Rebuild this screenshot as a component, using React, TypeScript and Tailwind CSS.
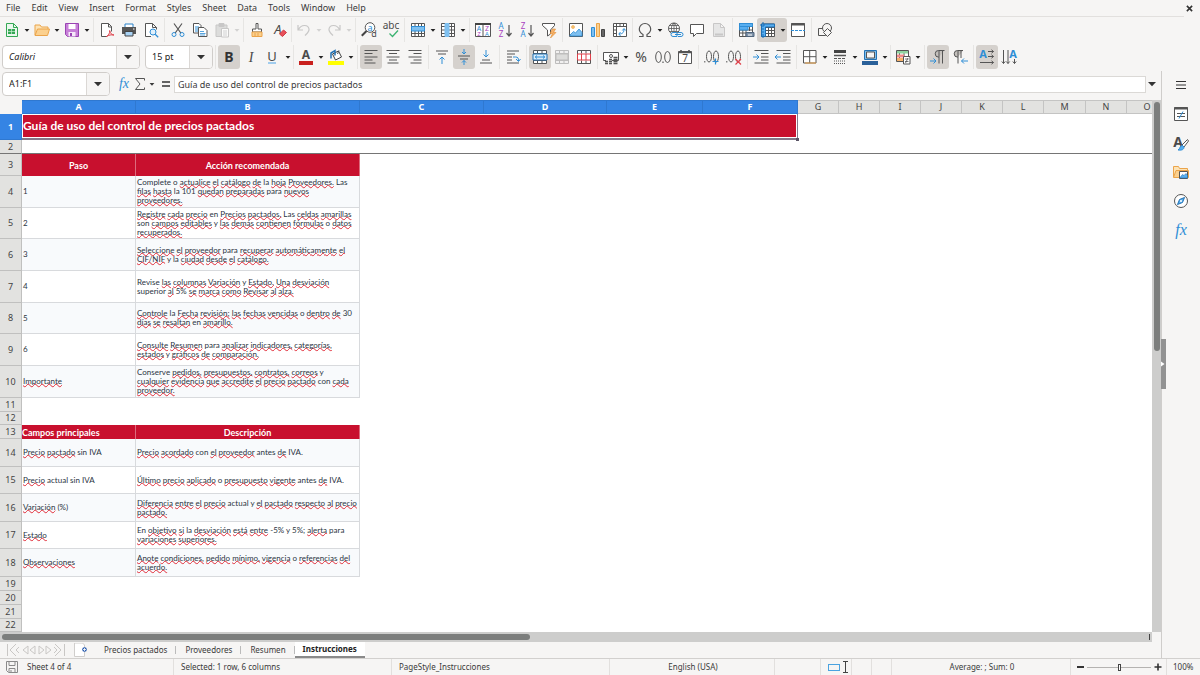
import type { ReactNode } from "react";
import clsx from "clsx";

const menus = ["File", "Edit", "View", "Insert", "Format", "Styles", "Sheet", "Data", "Tools", "Window", "Help"];

const columns = [
  { name: "A", width: "w-[114px]", selected: true },
  { name: "B", width: "w-56", selected: true },
  { name: "C", width: "w-[124px]", selected: true },
  { name: "D", width: "w-[123px]", selected: true },
  { name: "E", width: "w-24", selected: true },
  { name: "F", width: "w-[95px]", selected: true },
  { name: "G", width: "w-[41px]" },
  { name: "H", width: "w-[41px]" },
  { name: "I", width: "w-[41px]" },
  { name: "J", width: "w-[41px]" },
  { name: "K", width: "w-[41px]" },
  { name: "L", width: "w-[41px]" },
  { name: "M", width: "w-[42px]" },
  { name: "N", width: "w-[41px]" },
  { name: "O", width: "w-[41px]" },
];

type Row = {
  n: number;
  height: string;
  kind?: "title" | "head" | "data" | "frozen";
  a?: string;
  b?: string[];
  striped?: boolean;
};

// Words between brackets get the spellcheck wave
const rows: Row[] = [
  { n: 1, height: "h-[26px]", kind: "title", a: "Guía de uso del control de precios pactados" },
  { n: 2, height: "h-3.5", kind: "frozen" },
  { n: 3, height: "h-[22px]", kind: "head", a: "Paso", b: ["Acción recomendada"] },
  {
    n: 4, height: "h-8", kind: "data", striped: true, a: "1",
    b: [
      "Complete o [actualice] [el] [catálogo] [de] la [hoja] [Proveedores.] Las",
      "[filas] [hasta] la 101 [quedan] [preparadas] para [nuevos]",
      "[proveedores.]",
    ],
  },
  {
    n: 5, height: "h-[31px]", kind: "data", a: "2",
    b: [
      "[Registre] [cada] [precio] en [Precios] [pactados.] Las [celdas] [amarillas]",
      "son [campos] [editables] y [las] [demás] [contienen] [fórmulas] o [datos]",
      "[recuperados.]",
    ],
  },
  {
    n: 6, height: "h-8", kind: "data", striped: true, a: "3",
    b: ["[Seleccione] [el] [proveedor] para [recuperar] [automáticamente] [el]", "[CIF/NIF] y la [ciudad] [desde] [el] [catálogo.]"],
  },
  {
    n: 7, height: "h-8", kind: "data", a: "4",
    b: ["Revise [las] [columnas] [Variación] y [Estado.] [Una] [desviación]", "superior [al] 5% [se] [marca] [como] [Revisar] [al] [alza.]"],
  },
  {
    n: 8, height: "h-[31px]", kind: "data", striped: true, a: "5",
    b: ["[Controle] la [Fecha] [revisión;] [las] [fechas] [vencidas] o [dentro] [de] 30", "[días] [se] [resaltan] en [amarillo.]"],
  },
  {
    n: 9, height: "h-8", kind: "data", a: "6",
    b: ["[Consulte] [Resumen] para [analizar] [indicadores,] [categorías,]", "[estados] y [gráficos] [de] [comparación.]"],
  },
  {
    n: 10, height: "h-8", kind: "data", striped: true, a: "[Importante]",
    b: [
      "Conserve [pedidos,] [presupuestos,] [contratos,] [correos] y",
      "[cualquier] [evidencia] [que] [accredite] [el] [precio] [pactado] con [cada]",
      "[proveedor.]",
    ],
  },
  { n: 11, height: "h-3.5" },
  { n: 12, height: "h-[13px]" },
  { n: 13, height: "h-3.5", kind: "head", a: "Campos principales", b: ["Descripción"] },
  {
    n: 14, height: "h-7", kind: "data", striped: true, a: "[Precio] [pactado] sin IVA",
    b: ["[Precio] [acordado] con [el] [proveedor] antes [de] IVA."],
  },
  {
    n: 15, height: "h-[27px]", kind: "data", a: "[Precio] actual sin IVA",
    b: ["[Último] [precio] [aplicado] o [presupuesto] [vigente] antes [de] IVA."],
  },
  {
    n: 16, height: "h-7", kind: "data", striped: true, a: "[Variación] (%)",
    b: ["[Diferencia] [entre] [el] [precio] actual y [el] [pactado] [respecto] [al] [precio]", "[pactado.]"],
  },
  {
    n: 17, height: "h-[27px]", kind: "data", a: "[Estado]",
    b: ["En [objetivo] [si] la [desviación] [está] [entre] -5% y 5%; [alerta] para", "[variaciones] [superiores.]"],
  },
  {
    n: 18, height: "h-7", kind: "data", striped: true, a: "[Observaciones]",
    b: ["[Anote] [condiciones,] [pedido] [mínimo,] [vigencia] o [referencias] [del]", "[acuerdo.]"],
  },
  { n: 19, height: "h-3.5" },
  { n: 20, height: "h-3.5" },
  { n: 21, height: "h-3.5" },
  { n: 22, height: "h-[13px]" },
];

const Spelled = ({ text }: { text: string }) => (
  <>
    {text.split(/(\[[^\]]+\])/).map((part, i) =>
      part.startsWith("[") ? (
        <span key={i} className="underline decoration-[#e02b38] decoration-wavy decoration-1 [text-decoration-skip-ink:none] [text-underline-offset:-1px]">
          {part.slice(1, -1)}
        </span>
      ) : (
        part
      ),
    )}
  </>
);

const Caret = () => (
  <svg viewBox="0 0 8 8" className="size-2 shrink-0" aria-hidden="true">
    <path d="M1.6 3h4.8L4 5.8z" fill="currentColor" />
  </svg>
);

const BigCaret = () => (
  <svg viewBox="0 0 10 10" className="size-2.5" aria-hidden="true">
    <path d="M1 3h8L5 7.3z" fill="#333" />
  </svg>
);

const Sep = ({ tight }: { tight?: boolean }) => (
  <span className={clsx("flex h-6 shrink-0 justify-center", tight ? "w-[3px]" : "w-[5px]")}>
    <span className="w-px bg-[#e6e5e3]" />
  </span>
);

type ToolProps = { label: string; children: ReactNode; menu?: boolean; active?: boolean; disabled?: boolean };

const Tool = ({ label, children, menu, active, disabled }: ToolProps) => (
  <button
    type="button"
    aria-label={label}
    disabled={disabled}
    className={clsx(
      "flex h-6 shrink-0 items-center rounded-[3px]",
      menu ? "w-[30px] pl-[3px]" : "w-[22px] justify-center",
      active && "bg-[#d5d1cd]",
      disabled ? "text-[#bbb] opacity-60" : "text-[#222]",
    )}
  >
    <svg viewBox="0 0 16 16" className="size-4 shrink-0 overflow-visible" fill="none" stroke="#555" strokeWidth="1" aria-hidden="true">
      {children}
    </svg>
    {menu && <span className="ml-[3px]"><Caret /></span>}
  </button>
);

const T = ({ x, y, size, fill = "#4a4a4a", bold, italic, serif, children }: {
  x: number; y: number; size: number; fill?: string; bold?: boolean; italic?: boolean; serif?: boolean; children: ReactNode;
}) => (
  <text
    x={x}
    y={y}
    fontSize={size}
    fill={fill}
    stroke="none"
    textAnchor="middle"
    fontWeight={bold ? 700 : 400}
    fontStyle={italic ? "italic" : "normal"}
    fontFamily={serif ? '"Liberation Serif", serif' : '"Noto Sans", sans-serif'}
  >
    {children}
  </text>
);

const Doc = ({ fill = "#fff", stroke = "#666" }: { fill?: string; stroke?: string }) => (
  <path d="M2.5 1.5h7l4 4v9h-11zM9.5 1.5v4h4" fill={fill} stroke={stroke} />
);

const StandardToolbar = () => (
  <div className="flex pl-px pt-px" role="toolbar" aria-label="Standard">
    <Tool label="New" menu>
      <path d="M2.5 1.5h7l4 4v9h-11z" fill="#eaf7ee" stroke="#35a854" />
      <path d="M9.5 1.5v4h4" stroke="#35a854" />
      <path d="M4 7h7v5H4z" fill="#35a854" stroke="none" />
      <path d="M4 9.5h7M7.5 7v5" stroke="#c9ecd3" strokeWidth=".7" />
    </Tool>
    <Tool label="Open" menu>
      <path d="M1 13V3h5l1.5 2H14v2" fill="#fde3b5" stroke="#eba44a" />
      <path d="M1 13.5 3.5 7h12l-2 6.5z" fill="#fbd08e" stroke="#eba44a" />
    </Tool>
    <Tool label="Save" menu>
      <path d="M1.5 1.5h13v13h-11l-2-2z" fill="#c77fd8" stroke="#9a44b3" />
      <path d="M4.5 2h7v5h-7z" fill="#fff" stroke="none" />
      <path d="M4.5 10h7v4.5h-7z" fill="#f6eaf9" stroke="none" />
      <path d="M6 11h2v3H6z" fill="#9a44b3" stroke="none" />
    </Tool>
    <Sep />
    <Tool label="Export as PDF">
      <path d="M8 14.5H2.5v-13h7l3 3v5M9.5 1.5V5H13" fill="#fff" />
      <path d="M7.5 14.5c2-1 3.5-3.500 3.200-6 .8 3 2 4.500 4.300 4.500-3-.5-5 0-7.500 1.500z" stroke="#e0404a" />
    </Tool>
    <Tool label="Print">
      <path d="M4 5V2h8v3" fill="#fff" stroke="#2b82c9" />
      <path d="M1 5h14v7H1z" fill="#555" stroke="none" />
      <path d="M4 9.5h8V14H4z" fill="#a9d3f5" stroke="#444" />
      <path d="M12 7h1.5" stroke="#fff" />
    </Tool>
    <Tool label="Print preview">
      <path d="M8 14.5H2.5v-13h7l4 4v2M9.5 1.5v4h4" fill="#fff" />
      <circle cx="10" cy="10" r="3" fill="#dff0fc" stroke="#2f8ed6" />
      <path d="m12.2 12.2 3 3" stroke="#2f8ed6" strokeWidth="1.3" />
    </Tool>
    <Sep />
    <Tool label="Cut">
      <path d="M4 1.5 10.8 11M12 1.5 5.2 11" stroke="#555" strokeWidth="1.2" />
      <circle cx="4" cy="12.5" r="2" stroke="#2f8ed6" />
      <circle cx="12" cy="12.5" r="2" stroke="#2f8ed6" />
    </Tool>
    <Tool label="Copy">
      <path d="M1.5 1.5H7l2 2V11H1.5z" fill="#fff" />
      <path d="M3 5h4M3 7h3M3 9h3" stroke="#2f8ed6" />
      <path d="M6.5 5.5H12l3 3v6H6.5z" fill="#fff" />
      <path d="M8 9.5h4M8 11.5h5.5M8 13h5" stroke="#2f8ed6" strokeWidth=".8" />
    </Tool>
    <Tool label="Paste" menu disabled>
      <path d="M2 3h11v11.500H2z" fill="#ccc" stroke="#aaa" />
      <path d="M5 1.5h5v3H5z" fill="#aaa" stroke="#aaa" />
      <path d="M7.5 6.5h7V15h-7z" fill="#fff" stroke="#aaa" />
      <path d="M9 9h4M9 11h4M9 13h4" stroke="#bbb" />
    </Tool>
    <Sep />
    <Tool label="Clone formatting">
      <path d="M7 1.5h2V7h3.5v3h-9V7H7z" fill="#fff" />
      <path d="M3 10h10v4.5H3z" fill="#fbd08e" stroke="#eba44a" />
      <path d="M6 11v3M9 11v3" stroke="#eba44a" />
    </Tool>
    <Tool label="Clear direct formatting">
      <T x={7} y={12} size={13} italic>A</T>
      <path d="m8.5 12 4-4 3 2.5-4 4z" fill="#e8505a" stroke="#cf3a45" />
    </Tool>
    <Sep tight />
    <Tool label="Undo" menu disabled>
      <path d="M2 3v5h5M2.5 7.5C5 2.5 12 2 13 7c.5 2.5-2 4.5-4 6.5" stroke="#aaa" strokeWidth="1.2" />
    </Tool>
    <Tool label="Redo" menu disabled>
      <path d="M14 3v5H9M13.5 7.5C11 2.5 4 2 3 7c-.5 2.5 2 4.5 4 6.5" stroke="#aaa" strokeWidth="1.2" />
    </Tool>
    <Sep />
    <Tool label="Find and replace">
      <circle cx="9" cy="5.5" r="4.8" fill="#fff" />
      <path d="M5.5 9 .8 13.7" stroke="#444" strokeWidth="2" />
      <T x={9} y={8.5} size={9} fill="#2f8ed6">a</T>
      <T x={13} y={15} size={9}>d</T>
    </Tool>
    <Tool label="Spelling">
      <T x={8} y={7} size={10}>abc</T>
      <path d="m6.5 11.5 3 3L15 8.5" stroke="#3cb371" strokeWidth="1.3" />
    </Tool>
    <Sep />
    <Tool label="Row" menu>
      <path d="M1.5 1.5h13v13h-13z" fill="#fff" />
      <path d="M1.5 11.5h13M5 1.5v13M8.5 1.5v13M11.5 1.5v13" />
      <path d="M1.500 4.500h13V9h-13z" fill="#7fc0f0" stroke="#2f8ed6" />
    </Tool>
    <Tool label="Column" menu>
      <path d="M1.5 1.5h13v13h-13z" fill="#fff" />
      <path d="M11.5 1.5v13M1.5 4.5h13M1.5 8h13M1.5 11.5h13" />
      <path d="M5 1.500h4v13H5z" fill="#7fc0f0" stroke="#7fc0f0" />
    </Tool>
    <Sep />
    <Tool label="Sort">
      <path d="M.5 1.5h15v13H.5zM8 3v12" fill="#fff" />
      <path d="M0 2h16" stroke="#444" strokeWidth="2" />
      <T x={4} y={9} size={7} fill="#2f8ed6">A</T>
      <T x={4} y={14} size={6} fill="#a93fc0">Z</T>
      <T x={12} y={9} size={7} fill="#a93fc0">Z</T>
      <T x={12} y={14} size={6} fill="#2f8ed6">A</T>
    </Tool>
    <Tool label="Sort ascending">
      <T x={4} y={7} size={8} fill="#2f8ed6">A</T>
      <T x={4} y={15} size={8} fill="#a93fc0">Z</T>
      <path d="M12 3v11M9.5 11l2.5 3 2.5-3" strokeWidth="1.2" />
    </Tool>
    <Tool label="Sort descending">
      <T x={4} y={7} size={8} fill="#a93fc0">Z</T>
      <T x={4} y={15} size={8} fill="#2f8ed6">A</T>
      <path d="M12 3v11M9.5 11l2.5 3 2.5-3" strokeWidth="1.2" />
    </Tool>
    <Tool label="AutoFilter">
      <path d="M1.5 1.5h12v2l-4 4.5v4l-3 2V8l-5-4.5z" fill="#fff" />
      <path d="M11.5 7 9 11.5h2.500L9.500 16l5.500-5.500h-2.500L14.500 7z" fill="#f6b26b" stroke="#e08a2c" strokeWidth=".6" />
    </Tool>
    <Sep />
    <Tool label="Insert image">
      <path d="M1.5 1.5h13v13h-13z" fill="#fff" />
      <circle cx="5" cy="5" r="1.5" fill="#f8c471" stroke="#eba44a" strokeWidth=".6" />
      <path d="m2 13 3.5-3.5 2 1.5L11 7l3 3.5V14H2z" fill="#7fc0f0" stroke="#2f8ed6" strokeWidth=".8" />
    </Tool>
    <Tool label="Insert chart">
      <path d="M1.5 5.5h3v9h-3z" fill="#7fc0f0" stroke="#2f8ed6" />
      <path d="M6.5 1.5h3v13h-3z" fill="#fbd08e" stroke="#eba44a" />
      <path d="M11.5 7.5h3v7h-3z" fill="#666" stroke="#444" />
    </Tool>
    <Tool label="Insert pivot table">
      <path d="M1.5 1.5h13v13h-13z" fill="#fff" />
      <path d="M1.5 4.5h13M4.5 1.5v13M8 1.5v3M11.5 1.5v3M1.5 8h3M1.5 11.5h3" />
      <path d="M7 12c4 0 5-2 5-5M8.5 10l-1.700 2 1.700 2M10.300 8.500 12 6.500l1.700 2" stroke="#2f8ed6" />
    </Tool>
    <Sep tight />
    <Tool label="Special character" menu>
      <path d="M2 14.5h4v-2C3.5 11 2.3 9.2 2.3 7A5.6 5.6 0 0 1 8 1.5 5.6 5.6 0 0 1 13.7 7c0 2.2-1.2 4-3.700 5.500v2h4" strokeWidth="1.200" />
    </Tool>
    <Tool label="Insert hyperlink">
      <circle cx="7" cy="6.5" r="5.5" fill="#fff" />
      <path d="M1.5 6.5h11M7 1v11M2.5 3.5h9M2.5 9.5h9M7 1C3.5 4 3.5 9 7 12M7 1c3.500 3 3.500 8 0 11" strokeWidth=".8" />
      <path d="M6 10.5h4v4H6a2 2 0 0 1 0-4zM11 10.5h3a2 2 0 0 1 0 4h-3M8 12.5h6" fill="#f6f5f4" stroke="#2f8ed6" />
    </Tool>
    <Tool label="Insert comment">
      <path d="M1.5 2.5h13v9h-7l-3 3v-3h-3z" fill="#fff" />
    </Tool>
    <Tool label="Headers and footers" disabled>
      <Doc fill="#ddd" stroke="#aaa" />
      <path d="M4 11.5h8v2H4z" fill="#aaa" stroke="none" />
    </Tool>
    <Sep />
    <Tool label="Define print area">
      <path d="M1.5 1.5h13v13h-13zM1.5 8h13M1.5 11h13M4.8 8v6M8 1.5v13M11.5 1.5v13" fill="#fff" />
      <path d="M1.500 1.500h13v3h-13zM1.500 4.500H10V8H1.500z" fill="#58aef0" stroke="#2f8ed6" />
      <path d="M8 10.5h8v4H8z" fill="#7f93aa" stroke="#50657c" />
      <path d="M10 9.5h4M10 13h4" stroke="#fff" />
    </Tool>
    <Tool label="Freeze rows and columns" menu active>
      <path d="M1.5 2h13v12.500h-13zM5 5.500h9.500M5 8.500h9.500M5 11.500h9.500M8.500 2v12.500M11.500 2v12.500" fill="#fff" />
      <path d="M1.5 2h13v3h-9v9.500h-4z" fill="#58aef0" stroke="#1c6fb5" />
      <path d="M3 0v16M0 3h6" stroke="#1c6fb5" strokeDasharray="2 1" />
    </Tool>
    <Tool label="Split window">
      <path d="M1.5 1.5h13v13h-13z" fill="#fff" />
      <path d="M1 2.5h14" strokeWidth="2" />
      <path d="M1 8.5h14" stroke="#2f8ed6" strokeDasharray="3 1" />
    </Tool>
    <Sep />
    <Tool label="Show draw functions">
      <path d="M1.5 6.5h7v7h-7z" />
      <circle cx="10" cy="6" r="4.5" fill="#f6f5f4" />
      <path d="m10.5 6.5 4 4-4 4-4-4z" fill="#f6f5f4" />
    </Tool>
  </div>
);

const Combo = ({ id, label, value, className, italic }: {
  id: string; label: string; value: string; className: string; italic?: boolean;
}) => (
  <div className={clsx("flex h-6 shrink-0 overflow-hidden rounded-[4px] border border-[#d0cdca] bg-white", className)}>
    <input
      id={id}
      aria-label={label}
      defaultValue={value}
      className={clsx("min-w-0 flex-1 bg-transparent px-1.5 text-[9px] text-[#222] outline-none", italic && "italic")}
    />
    <button type="button" aria-label={`${label} list`} className="flex w-[23px] items-center justify-center border-l border-[#dbd8d5] bg-[#f6f5f4]">
      <BigCaret />
    </button>
  </div>
);

const FormattingToolbar = () => (
  <div className="flex pb-0.5 pt-[3px]" role="toolbar" aria-label="Formatting">
    <div className="flex gap-[5px] pl-0.5">
      <Combo id="font-name" label="Font name" value="Calibri" className="w-[138px]" italic />
      <Combo id="font-size" label="Font size" value="15 pt" className="w-[68px]" />
    </div>
    <Sep />
    <Tool label="Bold" active><T x={8} y={13} size={14} bold fill="#333">B</T></Tool>
    <Tool label="Italic"><T x={8} y={13} size={14} italic serif>I</T></Tool>
    <Tool label="Underline" menu>
      <T x={7} y={12} size={13}>U</T>
      <path d="M3 14h8" stroke="#4aa3e8" />
    </Tool>
    <Sep tight />
    <Tool label="Font color" menu>
      <T x={8} y={10} size={12} bold>A</T>
      <path d="M1 12h14v4H1z" fill="#c9211e" stroke="none" />
    </Tool>
    <Tool label="Background color" menu>
      <path d="m4.5 5 6-3 3 6-6 3z" fill="#fff" stroke="#444" />
      <path d="M3 9.5V4l4-2.500v5" stroke="#2472b3" strokeWidth="1.500" />
      <path d="M11 1.5 9.5 5" />
      <path d="M0 12h16v4H0z" fill="#ff0" stroke="none" />
    </Tool>
    <Sep />
    <Tool label="Align left" active><path d="M1.5 1.5h13M1.5 4.5h8M1.5 8h13M1.5 11h8M1.5 14h11" /></Tool>
    <Tool label="Align center"><path d="M1.5 1.5h13M4 4.5h8M1.5 8h13M4 11h8M2.5 14h11" /></Tool>
    <Tool label="Align right"><path d="M1.5 1.5h13M6.5 4.5h8M1.5 8h13M6.5 11h8M3.5 14h11" /></Tool>
    <Sep />
    <Tool label="Align top">
      <path d="M2 2h12M4 5h8" strokeWidth="1.2" />
      <path d="M8 15V8M5.5 10.5 8 8l2.5 2.5" stroke="#2f8ed6" />
    </Tool>
    <Tool label="Center vertically" active>
      <path d="M2 7h12M4 10h8" strokeWidth="1.2" />
      <path d="M8 0v5M6 3l2 2 2-2M8 16v-4.5M6 13.5l2-2 2 2" stroke="#2f8ed6" />
    </Tool>
    <Tool label="Align bottom">
      <path d="M4 11h8M2 14h12" strokeWidth="1.2" />
      <path d="M8 1v7M5.5 5.5 8 8l2.5-2.5" stroke="#2f8ed6" />
    </Tool>
    <Sep />
    <Tool label="Wrap text">
      <path d="M2 2h12M2 5h8M2 8h5M2 11h5M2 14h12" strokeWidth="1.2" />
      <path d="M8 8h2.5c2.5 0 3 1 3 4M11 10l2.5 2.5 2-2.5" stroke="#2f8ed6" />
    </Tool>
    <Sep />
    <Tool label="Merge and center cells" active>
      <path d="M1.5 1.5h13v13h-13zM1.5 4.5h13M1.5 11.5h13M5.5 1.5v3M10 1.5v3M5.5 11.5v3M10 11.5v3" fill="#fff" />
      <path d="M1 5h14v6H1z" fill="#d8ecfb" stroke="#2472b3" />
      <path d="M3 8h10M5 6.5 3.3 8 5 9.5M11 6.5 12.7 8 11 9.5" stroke="#2f8ed6" />
    </Tool>
    <Tool label="Merge cells" disabled>
      <path d="M1.5 1.5h13v13h-13zM1.5 4.5h13M1.5 11.5h13M5.5 1.5v3M10 1.5v3M5.5 11.5v3M10 11.5v3" fill="#eee" stroke="#999" />
      <path d="M2 5h12v6H2z" fill="#ccc" stroke="#999" />
    </Tool>
    <Tool label="Split cells">
      <path d="M1.5 1.5h13v13h-13zM5.5 1.5v3M10 1.5v3M5.5 11.5v3M10 11.5v3" fill="#fff" />
      <path d="M1.5 5h13M1.5 11h13M1.5 5v6M5.5 5v6M10 5v6M14.5 5v6" stroke="#e0404a" />
    </Tool>
    <Sep />
    <Tool label="Format as currency" menu>
      <path d="M9 11.500h6.500v-8H.5v8H3" fill="#fff" />
      <circle cx="8" cy="7" r="1.5" />
      <path d="M2 12.500h3M2 14.500h3M6 12.500h3M6 10.500h3M6 14.500h3M10.500 8.500h4M10.500 10.500h4M10.500 12.500h4M10.500 14.500h4" strokeWidth="1.400" />
    </Tool>
    <Tool label="Format as percent"><T x={8} y={13} size={14}>%</T></Tool>
    <Tool label="Format as number">
      <ellipse cx="3.5" cy="8" rx="2.8" ry="5.5" />
      <ellipse cx="12.5" cy="8" rx="2.8" ry="5.5" />
      <path d="M8 12.5V14" strokeWidth="1.2" />
    </Tool>
    <Tool label="Format as date">
      <path d="M1.5 2.5h13v12h-13z" fill="#fff" />
      <path d="M1 3.5h14M4 1v3M12 1v3" strokeWidth="1.6" />
      <T x={8} y={13} size={10}>7</T>
    </Tool>
    <Sep />
    <Tool label="Add decimal place">
      <path d="M.8 12v1.5" />
      <ellipse cx="5" cy="7.5" rx="2.5" ry="5.5" />
      <ellipse cx="12" cy="7.5" rx="2.5" ry="5.5" />
      <path d="M8.5 12.5h6M11.500 9.500v6" stroke="#2f8ed6" strokeWidth="1.200" />
    </Tool>
    <Tool label="Delete decimal place">
      <path d="M.8 12v1.5" />
      <ellipse cx="5" cy="7.5" rx="2.5" ry="5.5" />
      <ellipse cx="12" cy="7.5" rx="2.5" ry="5.5" />
      <path d="m9.5 10 5.5 5.5M15 10l-5.5 5.5" stroke="#e0404a" strokeWidth="1.2" />
    </Tool>
    <Sep />
    <Tool label="Increase indent">
      <path d="M1.5 1.5h14M8 4.5h7.5M8 8h7.5M8 11h7.5M1.5 14h14" />
      <path d="M0 8h6M3.5 5.5 6 8l-2.5 2.5" stroke="#2f8ed6" />
    </Tool>
    <Tool label="Decrease indent">
      <path d="M1.5 1.5h14M8 4.5h7.5M8 8h7.5M8 11h7.5M1.5 14h14" />
      <path d="M0 8h6M2.5 5.5 0 8l2.5 2.5" stroke="#2f8ed6" />
    </Tool>
    <Sep />
    <Tool label="Borders" menu>
      <path d="M1.5 1.5H14V14H1.5z" fill="#fff" />
      <path d="M1.5 7.7H14M7.7 1.5V14" />
      <path d="M3 14h11" stroke="#eba44a" />
    </Tool>
    <Tool label="Border style" menu>
      <path d="M2 2.5h12" stroke="#444" strokeWidth="3" />
      <path d="M2 6.5h12" strokeWidth="1.5" />
      <path d="M2 9.5h12" strokeDasharray="3 1" />
      <path d="M2 12h12M2 14.5h12" strokeDasharray="1 1" />
    </Tool>
    <Tool label="Border color" menu>
      <path d="M2.5 1.5h12v9h-12z" fill="#7fc0f0" stroke="#2472b3" />
      <path d="M4.5 3h8v6h-8z" fill="#f6f5f4" />
      <path d="M0 12h16v4H0z" fill="#2a6099" stroke="none" />
    </Tool>
    <Sep tight />
    <Tool label="Conditional" menu>
      <path d="M1.5 1.5h12v11h-12zM4.5 1.5v11M9 1.5v11" fill="#fff" />
      <path d="M2 2h11v2.5H2z" fill="#8fd3a0" stroke="none" />
      <path d="M2 5.5h7v3H2z" fill="#f08a8a" stroke="none" />
      <path d="M2 9h6v3H2z" fill="#f6b26b" stroke="none" />
      <path d="M8.5 7.5H15V15H8.5z" fill="#fff" />
      <path d="M10 10h3.5M10 12.5h3.5M13 9l-2.5 5" strokeWidth=".8" />
    </Tool>
    <Sep />
    <Tool label="Left-to-right" active>
      <path d="M9 14.5v-13M12.5 14.5v-13M14.5 1.5h-6a3.3 3.3 0 0 0 0 6.6H9" fill="#c4c0bc" />
      <path d="M0 12h6M3.5 9.5 6 12l-2.5 2.5" stroke="#2f8ed6" />
    </Tool>
    <Tool label="Right-to-left">
      <path d="M6 14.5v-13M9 9V1.5M11 1.5H5.5a3.3 3.3 0 0 0 0 6.6H6" fill="#c4c0bc" />
      <path d="M16 12H9.5M12 9.5 9.5 12l2.5 2.5" stroke="#2f8ed6" />
    </Tool>
    <Sep />
    <Tool label="Text direction from left to right" active>
      <T x={4} y={9} size={11} fill="#2f8ed6" bold>A</T>
      <path d="M9 2.5h5.5M9 7.5h5.5M1 13.5h13.5M12.5.8l2 1.7-2 1.7M12.5 5.8l2 1.7-2 1.7M12.5 11.8l2 1.7-2 1.7" />
    </Tool>
    <Tool label="Text direction from top to bottom">
      <T x={12} y={9} size={11} fill="#2f8ed6" bold>A</T>
      <path d="M2.5 1v13.5M7 1v13.5M13.5 10v4.5M.8 12.5l1.7 2 1.7-2M5.3 12.5l1.7 2 1.7-2M11.8 12.5l1.700 2 1.700-2" />
    </Tool>
  </div>
);

const FormulaBar = () => (
  <div className="flex items-center pb-1 pl-0.5 pt-px">
    <Combo id="name-box" label="Name box" value="A1:F1" className="w-[108px]" />
    <button type="button" aria-label="Function wizard" className="ml-1.5 w-4 text-center font-['Liberation_Serif',serif] text-sm leading-4 text-[#2f8ed6] italic">
      fx
    </button>
    <button type="button" aria-label="Select function" className="flex w-6 items-center">
      <svg viewBox="0 0 12 14" className="h-3.5 w-4 shrink-0" fill="none" stroke="#555" aria-hidden="true">
        <path d="M10.5 3.5v-2h-9L6 7l-4.5 5.5h9v-2" />
      </svg>
      <Caret />
    </button>
    <button type="button" aria-label="Formula" className="ml-0.5 w-4 text-center">
      <svg viewBox="0 0 10 10" className="mx-auto size-2.5" stroke="#333" strokeWidth="1.5" aria-hidden="true">
        <path d="M1 3h8M1 7h8" />
      </svg>
    </button>
    <input
      aria-label="Formula input"
      defaultValue="Guía de uso del control de precios pactados"
      className="h-[17px] min-w-0 flex-1 border border-[#dbd9d6] bg-white px-[3px] text-[9px] outline-none"
    />
    <button type="button" aria-label="Expand formula bar" className="flex w-[15px] justify-center pr-1"><BigCaret /></button>
  </div>
);

const RowCells = ({ row }: { row: Row }) => {
  if (row.kind === "title") {
    return (
      <>
        <td colSpan={6} className="relative border-b-2 border-r border-[#85788a] p-0">
          <div className="flex h-6 items-center border border-white bg-[#c8102e] text-xs font-bold text-white">{row.a}</div>
          <span className="absolute -bottom-[3px] -right-0.5 size-[3px] bg-[#5b5566]" />
        </td>
        <td colSpan={9} />
      </>
    );
  }
  if (row.kind === "frozen") return <td colSpan={15} className="border-b border-[#757575]" />;
  if (!row.kind) return <td colSpan={15} />;

  const head = row.kind === "head";
  const cell = clsx(
    "overflow-hidden border-r p-0 align-middle leading-[9px] whitespace-nowrap",
    head ? "border-[#dd6b7d] bg-[#c8102e] text-[9px] font-bold text-white" : "border-b border-[#d8dadd] pl-px text-[8px] text-[#2b3442]",
    row.striped && "bg-[#f8fafc]",
  );
  return (
    <>
      <td className={clsx(cell, head && row.n === 3 && "text-center")}>
        <Spelled text={row.a ?? ""} />
      </td>
      <td className={clsx(cell, head && "text-center")}>
        {row.b?.map((line) => (
          <div key={line}><Spelled text={line} /></div>
        ))}
      </td>
      <td colSpan={13} />
    </>
  );
};

const Sheet = () => (
  <div className="flex min-h-0 flex-1">
    <div className="min-w-0 flex-1 overflow-hidden bg-white">
      <table className="w-[1168px] table-fixed border-separate border-spacing-0">
        <colgroup>
          <col className="w-[22px]" />
          {columns.map((c) => <col key={c.name} className={c.width} />)}
        </colgroup>
        <thead>
          <tr className="h-3.5 text-[9px] leading-3">
            <th className="bg-[#f6f5f4] p-0" />
            {columns.map((c) => (
              <th
                key={c.name}
                scope="col"
                className={clsx(
                  "border-b border-r border-t p-0",
                  c.selected ? "border-[#2f78d0] bg-[#3584e4] font-bold text-white" : "border-[#c4c4c3] bg-[#e2e2e0] font-normal text-[#444]",
                )}
              >
                {c.name}
              </th>
            ))}
          </tr>
        </thead>
        <tbody className="font-['Lato','Noto_Sans',sans-serif]">
          {rows.map((row) => (
            <tr key={row.n} className={row.height}>
              <th
                scope="row"
                className={clsx(
                  "border-b border-r p-0 font-['Noto_Sans',sans-serif] text-[9px] leading-3",
                  row.n === 1 ? "border-[#2f78d0] bg-[#3584e4] font-bold text-white" : "border-[#c0c0bf] bg-[#e2e2e0] font-normal text-[#444]",
                  row.kind === "frozen" && "border-b-[#757575]",
                )}
              >
                {row.n}
              </th>
              <RowCells row={row} />
            </tr>
          ))}
        </tbody>
      </table>
    </div>
    <div className="flex w-[9px] flex-col items-center bg-[#cdcdcc] pt-0.5">
      <div className="h-[47%] w-1.5 rounded-full bg-[#7c7e7d]" />
    </div>
  </div>
);

const tabs = ["Precios pactados", "Proveedores", "Resumen"];

const SheetTabs = () => (
  <div className="flex h-4 items-stretch text-[8px]">
    <button type="button" aria-label="Scroll sheets" className="w-[68px] pl-1">
      <svg viewBox="0 0 64 14" className="h-3.5 w-16" fill="none" stroke="#c9c7c5" aria-hidden="true">
        <path d="M3.5 1v12M12 1 6 7l6 6M15 4l-3 3 3 3M24 3l-5 4 5 4zM31 3l-5 4 5 4zM35 3l5 4-5 4zM42 3l5 4-5 4zM51 1l6 6-6 6M50 4l3 3-3 3M60.5 1v12" />
      </svg>
    </button>
    <button type="button" aria-label="Add sheet" className="ml-1.5 mr-[5px] w-4">
      <svg viewBox="0 0 14 14" className="size-3.5" fill="#fff" stroke="#d0cecc" aria-hidden="true">
        <path d="M.5 0h8l2 2v11.5H.5z" />
        <circle cx="10.5" cy="6.5" r="2.3" fill="#2a5db0" stroke="none" />
        <path d="M9 6.5h3M10.5 5v3" stroke="#fff" strokeWidth=".8" />
      </svg>
    </button>
    {tabs.map((t) => (
      <button key={t} type="button" className="relative px-[9px] after:absolute after:right-0 after:top-1 after:h-2 after:w-px after:bg-[#bbb]">
        {t}
      </button>
    ))}
    <button type="button" className="border-b-2 border-[#8a8a8a] bg-white px-2 font-bold text-[#222]">Instrucciones</button>
  </div>
);

const Sidebar = () => (
  <aside className="relative flex w-[39px] shrink-0 flex-col items-center gap-[13px] border-l border-[#cfcdcb] pt-1.5">
    <button type="button" aria-label="Sidebar settings" className="flex size-4 items-center justify-center">
      <svg viewBox="0 0 10 10" className="size-2.5" stroke="#333" strokeWidth="1.2" aria-hidden="true">
        <path d="M0 1.5h10M0 5h10M0 8.5h10" />
      </svg>
    </button>
    <button type="button" aria-label="Properties">
      <svg viewBox="0 0 16 16" className="size-4" fill="none" stroke="#555" aria-hidden="true">
        <path d="M1.5 1.5h13v13h-13z" fill="#fff" />
        <path d="M1 2.5h14" strokeWidth="2" />
        <path d="M4 7.5h8M4 10.5h8" />
        <path d="m10 5.5-4 7" stroke="#2f8ed6" />
      </svg>
    </button>
    <button type="button" aria-label="Styles">
      <svg viewBox="0 0 16 16" className="size-4 overflow-visible" fill="none" stroke="#555" aria-hidden="true">
        <T x={5} y={12} size={14} bold>A</T>
        <path d="m9 10 5.5-5.5 1 1.500L11 12z" fill="#fff" />
        <path d="M9.5 10.5c-3 0-2 3-4.5 4.5 4 .5 6-.5 6-3z" fill="#58aef0" stroke="#2f8ed6" />
      </svg>
    </button>
    <button type="button" aria-label="Gallery">
      <svg viewBox="0 0 16 16" className="size-4" fill="none" stroke="#eba44a" aria-hidden="true">
        <path d="M.5 13V2.5h5l1 2h8V6" fill="#fde3b5" />
        <path d="M.5 13.5 3 6.5h12.5v7z" fill="#fbd08e" />
        <path d="M6.5 7.5h8v7h-8z" fill="#fff" stroke="#555" />
        <path d="m7 13.5 2.5-3 1.5 1 2-2 1.5 2V14H7z" fill="#58aef0" stroke="#2472b3" strokeWidth=".6" />
      </svg>
    </button>
    <button type="button" aria-label="Navigator">
      <svg viewBox="0 0 16 16" className="size-4" fill="none" stroke="#555" aria-hidden="true">
        <circle cx="8" cy="8" r="6.5" fill="#fff" />
        <path d="m11.5 4.5-2 5-5 2 2-5z" fill="#58aef0" stroke="#2472b3" />
        <circle cx="8" cy="8" r="1" fill="#fff" stroke="none" />
      </svg>
    </button>
    <button type="button" aria-label="Functions" className="font-['Liberation_Serif',serif] text-base leading-4 text-[#2f8ed6] italic">fx</button>
    <button type="button" aria-label="Hide sidebar" className="absolute -left-px top-67 flex h-[50px] w-[5px] items-center bg-[#929292]">
      <svg viewBox="0 0 4 6" className="h-1.5 w-1" fill="#fff" aria-hidden="true"><path d="M0 .5 3.5 3 0 5.5z" /></svg>
    </button>
  </aside>
);

const StatusBar = () => (
  <footer className="flex h-[17px] shrink-0 items-stretch divide-x divide-[#e2e0de] border-t border-[#d2d0ce] text-[8px]">
    <div className="flex w-[174px] items-center gap-[9px] pl-1.5">
      <svg viewBox="0 0 12 12" className="size-3" fill="none" stroke="#8a8a8a" aria-hidden="true">
        <path d="M.5.5h11v11h-9l-2-2zM3 1v3.5h6V1M3 11V7.5h6V11M5 9v2" />
      </svg>
      Sheet 4 of 4
    </div>
    <div className="flex w-[218px] items-center pl-[7px]">Selected: 1 row, 6 columns</div>
    <div className="flex w-[218px] items-center pl-[7px]">PageStyle_Instrucciones</div>
    <div className="flex flex-1 items-center justify-center pl-0.5">English (USA)</div>
    <div className="w-[46px]" />
    <div className="flex w-[31px] items-center gap-[3px] pl-[7px]">
      <span className="h-[7px] w-3 border border-[#4aa3e0]" />
      <svg viewBox="0 0 5 12" className="h-3 w-[5px]" fill="none" stroke="#444" aria-hidden="true">
        <path d="M0 .5h5M0 11.5h5M2.5 1v10" />
      </svg>
    </div>
    <div className="w-5" />
    <div className="w-5" />
    <div className="flex w-[179px] items-center justify-center pl-0.5">Average: ; Sum: 0</div>
    <div className="flex w-24 items-center justify-between pl-1.5 pr-1">
      <button type="button" aria-label="Zoom out" className="h-0.5 w-[7px] bg-[#333]" />
      <input
        type="range"
        aria-label="Zoom"
        defaultValue={50}
        className="h-2 w-16 appearance-none bg-[linear-gradient(#b5b3b1,#b5b3b1)] bg-[length:100%_1px] bg-center bg-no-repeat [&::-webkit-slider-thumb]:h-[7px] [&::-webkit-slider-thumb]:w-[3px] [&::-webkit-slider-thumb]:appearance-none [&::-webkit-slider-thumb]:border [&::-webkit-slider-thumb]:border-[#444] [&::-webkit-slider-thumb]:bg-white"
      />
      <button type="button" aria-label="Zoom in">
        <svg viewBox="0 0 8 8" className="size-2" stroke="#333" strokeWidth="1.6" aria-hidden="true"><path d="M.5 4h7M4 .5v7" /></svg>
      </button>
    </div>
    <div className="flex w-[33px] items-center pl-1.5">100%</div>
  </footer>
);

export default function App() {
  return (
    <div className="flex h-screen flex-col overflow-hidden bg-[#f6f5f4] font-['Noto_Sans',sans-serif] text-[#3a3a3a]">
      <header className="shrink-0">
        <div className="flex h-[17px] items-stretch">
          <nav className="flex flex-1 items-center gap-[11px] border-b border-[#e2e0de] pl-1.5 text-[9px]">
            {menus.map((m) => <button key={m} type="button">{m}</button>)}
          </nav>
          <button type="button" aria-label="Close document" className="flex w-4 items-center">
            <svg viewBox="0 0 8 8" className="ml-0.5 size-[7px]" stroke="#333" strokeWidth="1.8" aria-hidden="true"><path d="m1 1 6 6M7 1 1 7" /></svg>
          </button>
        </div>
        <StandardToolbar />
        <FormattingToolbar />
      </header>
      <div className="flex min-h-0 flex-1">
        <main className="flex min-w-0 flex-1 flex-col">
          <FormulaBar />
          <Sheet />
          <div className="mr-[9px] flex h-2.5 items-center justify-between bg-[#cdcdcc] px-0.5">
            <div className="h-1.5 w-[46%] rounded-full bg-[#7c7e7d]" />
            <div className="h-1.5 w-px bg-[#444]" />
          </div>
          <SheetTabs />
        </main>
        <Sidebar />
      </div>
      <StatusBar />
    </div>
  );
}
